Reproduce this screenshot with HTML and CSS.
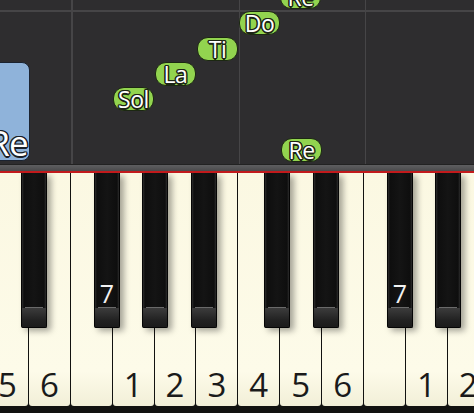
FILE: index.html
```html
<!DOCTYPE html>
<html>
<head>
<meta charset="utf-8">
<link rel="stylesheet" href="styles.css">
</head>
<body>
<div class="app">
  <div class="roll">
    <div class="hline"></div>
    <div class="vline v1"></div>
    <div class="vline v2"></div>
    <div class="vline v3"></div>
    <div class="held"><span>Re</span></div>
    <div class="note n-sol">Sol</div>
    <div class="note n-la">La</div>
    <div class="note n-ti">Ti</div>
    <div class="note n-do">Do</div>
    <div class="note n-re2">Re</div>
    <div class="note n-re">Re</div>
  </div>
  <div class="rail"></div>
  <div class="redline"></div>
  <div class="keyboard">
    <div class="whites">
      <div class="white"><span>5</span></div>
      <div class="white"><span>6</span></div>
      <div class="white"><span></span></div>
      <div class="white"><span>1</span></div>
      <div class="white"><span>2</span></div>
      <div class="white"><span>3</span></div>
      <div class="white"><span>4</span></div>
      <div class="white"><span>5</span></div>
      <div class="white"><span>6</span></div>
      <div class="white"><span></span></div>
      <div class="white"><span>1</span></div>
      <div class="white"><span>2</span></div>
    </div>
    <div class="black b1"></div>
    <div class="black b2"><span>7</span></div>
    <div class="black b3"></div>
    <div class="black b4"></div>
    <div class="black b5"></div>
    <div class="black b6"></div>
    <div class="black b7"><span>7</span></div>
    <div class="black b8"></div>
  </div>
</div>
</body>
</html>
```

FILE: styles.css
```css
html, body {
  margin: 0;
  padding: 0;
}
body {
  width: 474px;
  height: 413px;
  overflow: hidden;
  background: #111;
  font-family: "Open Sans", "DejaVu Sans", sans-serif;
}
.app {
  display: flex;
  flex-direction: column;
  width: 474px;
  height: 413px;
}
.roll {
  position: relative;
  height: 165px;
  background: #2e2d2f;
  overflow: hidden;
  border-bottom: 1px solid #222;
  box-sizing: border-box;
}
.hline {
  position: absolute;
  left: 0;
  right: 0;
  top: 10px;
  height: 1.5px;
  background: #464547;
}
.vline {
  position: absolute;
  top: 0;
  bottom: 0;
  width: 1.5px;
  background: #464547;
}
.v1 { left: 71px; }
.v2 { left: 238.5px; }
.v3 { left: 364.5px; }

.held {
  position: absolute;
  left: -14px;
  top: 62px;
  width: 42px;
  height: 97px;
  background: #8fb3da;
  border: 1.5px solid #1b2330;
  border-radius: 8px;
  display: flex;
  align-items: flex-end;
  justify-content: center;
  overflow: hidden;
}
.held span {
  font-size: 35px;
  font-weight: 500;
  line-height: 1;
  color: #fff;
  margin-bottom: 0;
  letter-spacing: -1px;
  text-shadow: -1.5px 0 #1a1f28, 1.5px 0 #1a1f28, 0 -1.5px #1a1f28, 0 1.5px #1a1f28,
    -1px -1px #1a1f28, 1px -1px #1a1f28, -1px 1px #1a1f28, 1px 1px #1a1f28;
}
.note {
  position: absolute;
  width: 39px;
  height: 22px;
  background: #92d44f;
  border: 1.5px solid #1c2812;
  border-radius: 11px;
  color: #fff;
  font-size: 23px;
  font-weight: 500;
  line-height: 22px;
  text-align: center;
  letter-spacing: -0.5px;
  white-space: nowrap;
  text-shadow: -1.5px 0 #1c2414, 1.5px 0 #1c2414, 0 -1.5px #1c2414, 0 1.5px #1c2414,
    -1px -1px #1c2414, 1px -1px #1c2414, -1px 1px #1c2414, 1px 1px #1c2414;
}
.n-sol { left: 113px; top: 87px; }
.n-la { left: 155px; top: 62px; }
.n-ti { left: 197px; top: 37px; }
.n-do { left: 239px; top: 11px; }
.n-re2 { left: 280px; top: -15px; }
.n-re { left: 281px; top: 138px; }

.rail {
  height: 6px;
  background: linear-gradient(#5e5e60, #4a4a4c);
}
.redline {
  height: 2px;
  background: #c21a1c;
}
.keyboard {
  position: relative;
  height: 240px;
  background: #121210;
  overflow: hidden;
}
.whites {
  display: flex;
  gap: 1px;
  margin-left: -13px;
  height: 233px;
}
.white {
  flex: 0 0 40.9px;
  height: 233px;
  background: linear-gradient(#fbf8e2, #fdfbe9 85%, #f2efd8);
  border-radius: 0 0 3px 3px;
  display: flex;
  align-items: flex-end;
  justify-content: center;
}
.white span {
  font-size: 33px;
  line-height: 33px;
  color: #1a1a1a;
  padding-bottom: 5px;
}
.black {
  position: absolute;
  top: 0;
  width: 26px;
  height: 155px;
  box-sizing: border-box;
  border: 1px solid #050505;
  border-top: none;
  border-radius: 0 0 2px 2px;
  background:
    linear-gradient(#6a6a6a 0, #6a6a6a 1px, transparent 1px) 3px 134px / calc(100% - 6px) 1px no-repeat,
    linear-gradient(#3c3c3c, #222 60%, #1a1a1a) 0 135px / 100% 20px no-repeat,
    linear-gradient(90deg, #2c2c2c 0, #0e0e0e 2px, #141414 50%, #0e0e0e calc(100% - 2px), #2c2c2c 100%),
    #111;
  box-shadow: 4px 3px 6px rgba(0, 0, 0, 0.35);
  display: flex;
  justify-content: center;
}
.black span {
  margin-top: 108px;
  font-size: 25px;
  line-height: 25px;
  color: #f2f2f2;
}
.b1 { left: 21px; }
.b2 { left: 94px; }
.b3 { left: 142px; }
.b4 { left: 191px; }
.b5 { left: 264px; }
.b6 { left: 313px; }
.b7 { left: 387px; }
.b8 { left: 435px; }
```
